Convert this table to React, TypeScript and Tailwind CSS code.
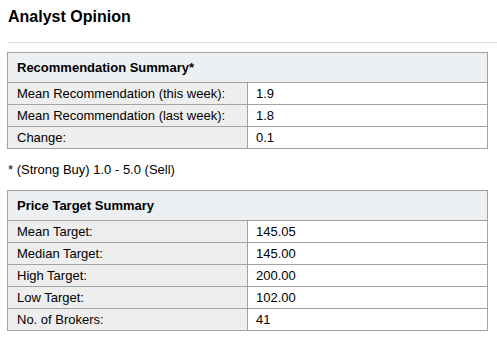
import React from "react";

const rec = [
  ["Mean Recommendation (this week):", "1.9"],
  ["Mean Recommendation (last week):", "1.8"],
  ["Change:", "0.1"],
];
const price = [
  ["Mean Target:", "145.05"],
  ["Median Target:", "145.00"],
  ["High Target:", "200.00"],
  ["Low Target:", "102.00"],
  ["No. of Brokers:", "41"],
];

function Summary({ title, rows }: { title: string; rows: string[][] }) {
  return (
    <table className="w-[481px] ml-[7px] border-collapse border border-[#a3a3a3] text-[13px] text-black">
      <thead>
        <tr>
          <th colSpan={2} className="h-[30px] bg-[#ecf0f3] border border-[#a3a3a3] text-left font-bold pl-[9px] pt-[1px]">
            {title}
          </th>
        </tr>
      </thead>
      <tbody>
        {rows.map(([k, v]) => (
          <tr key={k} className="h-[22px]">
            <td className="w-[240px] bg-[#eeeeee] border border-[#a3a3a3] pl-[9px] leading-none">{k}</td>
            <td className="bg-white border border-[#a3a3a3] pl-[8px] leading-none">{v}</td>
          </tr>
        ))}
      </tbody>
    </table>
  );
}

export default function App() {
  return (
    <div className="w-[497px] h-[344px] bg-white overflow-hidden" style={{ fontFamily: '"Liberation Sans", Arial, sans-serif' }}>
      <h1 className="text-[16px] font-bold text-black pl-[8px] pt-[7px] leading-[20px]">Analyst Opinion</h1>
      <div className="ml-[7px] mt-[15px] h-px bg-[#dddddd]" />
      <div className="mt-[9px]">
        <Summary title="Recommendation Summary*" rows={rec} />
      </div>
      <p className="text-[13px] text-black pl-[8px] mt-[13px] leading-[16px]">* (Strong Buy) 1.0 - 5.0 (Sell)</p>
      <div className="mt-[12px]">
        <Summary title="Price Target Summary" rows={price} />
      </div>
    </div>
  );
}
